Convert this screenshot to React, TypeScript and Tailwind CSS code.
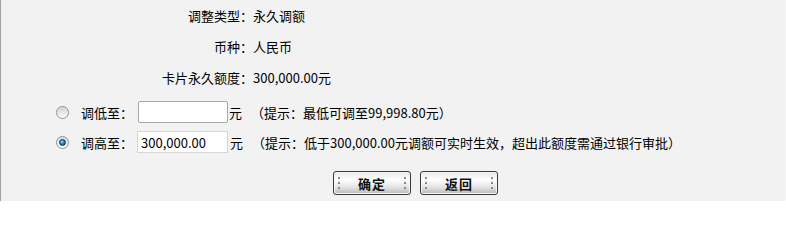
import React from "react";

function Radio({ checked }: { checked?: boolean }) {
  return (
    <span className="flex w-[13px] h-[13px] items-center justify-center rounded-full border border-[#8f8f8f] bg-[linear-gradient(to_bottom,#dcdcdc,#ffffff)] shrink-0">
      {checked ? (
        <span className="block w-[7px] h-[7px] rounded-full border border-[#0a2d5c] bg-[radial-gradient(circle_at_40%_35%,#9fd3ff_0%,#2d86d8_45%,#0b3f82_100%)]" />
      ) : (
        <span className="block w-[9px] h-[9px] rounded-full bg-[linear-gradient(to_bottom,#d4d4d4,#f8f8f8)]" />
      )}
    </span>
  );
}

function Rivets() {
  return (
    <span className="flex flex-col gap-[3px]">
      <span className="block w-[2px] h-[2px] bg-[#8a8a8a]" />
      <span className="block w-[2px] h-[2px] bg-[#8a8a8a]" />
      <span className="block w-[2px] h-[2px] bg-[#8a8a8a]" />
    </span>
  );
}

function Btn({ label }: { label: string }) {
  return (
    <div className="flex w-[78px] h-[24px] items-center justify-between px-[4px] rounded-[3px] border border-[#3a3a3a] bg-[linear-gradient(to_bottom,#e6e6e6_0%,#ffffff_35%,#e2e2e2_70%,#b9b9b9_100%)] shadow-[inset_0_0_0_1px_#f6f6f6]">
      <Rivets />
      <span className="text-[13px] font-semibold text-[#111] leading-none tracking-[1px]">{label}</span>
      <Rivets />
    </div>
  );
}

export default function App() {
  return (
    <div className="w-[786px] h-[201px] bg-[#f2f2f2] border-l border-[#a3a3a3] border-r border-r-[#f8f8f8] font-['Noto_Sans_CJK_SC',sans-serif] text-[13px] text-black leading-none">
      <div className="flex h-[31px] items-center">
        <div className="w-[252px] text-right">调整类型：</div>
        <div>永久调额</div>
      </div>
      <div className="flex h-[31px] items-center">
        <div className="w-[252px] text-right">币种：</div>
        <div>人民币</div>
      </div>
      <div className="flex h-[31px] items-center">
        <div className="w-[252px] text-right">卡片永久额度：</div>
        <div>300,000.00元</div>
      </div>

      <div className="flex h-[30px] items-center mt-[4px] pl-[55px]">
        <Radio />
        <span className="ml-[12px] w-[52px]">调低至：</span>
        <div className="ml-[5px] w-[90px] h-[22px] rounded-[2px] border border-[#a9a9a9] bg-white" />
        <span className="ml-[1px]">元</span>
        <span className="ml-[9px]">（提示：最低可调至99,998.80元）</span>
      </div>
      <div className="flex h-[30px] items-center pl-[55px]">
        <Radio checked />
        <span className="ml-[12px] w-[52px]">调高至：</span>
        <div className="ml-[4px] w-[91px] h-[22px] border border-[#d6d6d6] bg-white flex items-center pl-[3px]">
          300,000.00
        </div>
        <span className="ml-[2px]">元</span>
        <span className="ml-[9px]">（提示：低于300,000.00元调额可实时生效，超出此额度需通过银行审批）</span>
      </div>

      <div className="flex mt-[14px] pl-[332px] gap-[9px]">
        <Btn label="确定" />
        <Btn label="返回" />
      </div>
    </div>
  );
}
